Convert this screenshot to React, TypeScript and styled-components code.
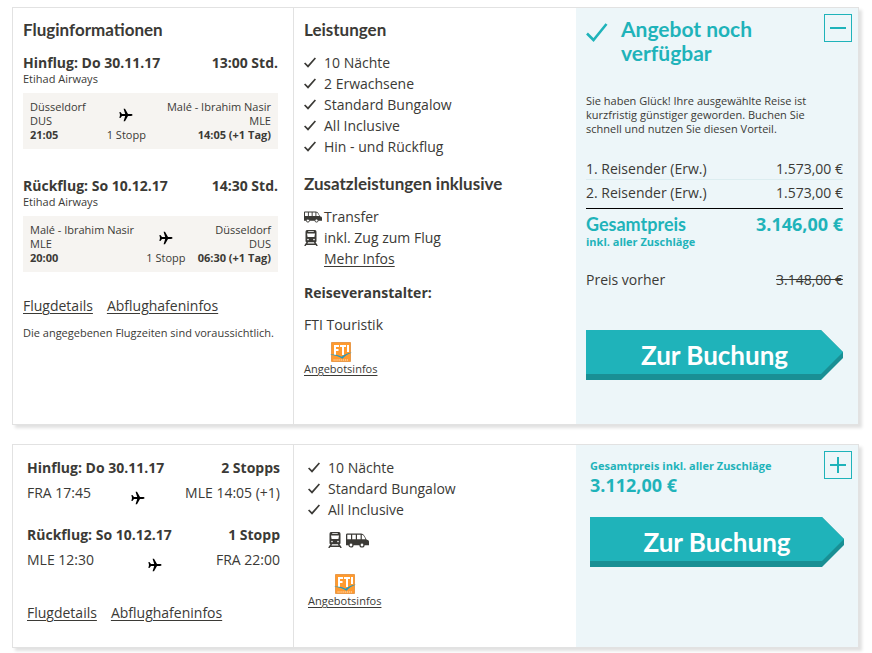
import React from "react";
import styled, { createGlobalStyle, css } from "styled-components";

const ink = "#3b3a36";
const teal = "#1fb3ba";
const tealDark = "#198f94";
const line = "#e2e2e2";

const GlobalStyle = createGlobalStyle`
  *, *::before, *::after { box-sizing: border-box; }
  body {
    margin: 0;
    background: #fff;
    color: ${ink};
    font-family: "Open Sans", "Noto Sans", sans-serif;
    font-size: 14px;
    line-height: 20px;
  }
  h2, h3, p, ul { margin: 0; padding: 0; }
  a { color: inherit; text-underline-offset: 2px; }
`;

const Page = styled.main`
  display: flex;
  flex-direction: column;
  gap: 19px;
  padding: 7px 13px 5px 12px;
`;

const Card = styled.article<{ $tall?: boolean }>`
  display: grid;
  grid-template-columns: 281fr 282fr 282fr;
  min-height: ${(p) => (p.$tall ? 418 : 204)}px;
  border: 1px solid ${line};
  background: #fff;
  box-shadow: 3px 3px 3px rgba(0, 0, 0, 0.12);
`;

const FlightColumn = styled.section<{ $compact?: boolean }>`
  border-right: 1px solid ${line};
  padding: ${(p) => (p.$compact ? "12px 13px 0 14px" : "12px 15px 0 10px")};
`;

const ServiceColumn = styled.section<{ $compact?: boolean }>`
  padding: ${(p) => (p.$compact ? "12px 10px 0 14px" : "12px 10px 0 10px")};
`;

const OfferColumn = styled.section<{ $compact?: boolean }>`
  background: #edf6f9;
  padding: 6px 6px 0 ${(p) => (p.$compact ? 14 : 10)}px;
`;

const headingFont = css`
  font-family: Lato, "Open Sans", sans-serif;
  font-weight: 700;
`;

const Title = styled.h2<{ $spaced?: boolean }>`
  ${headingFont}
  font-size: 17px;
  line-height: 20px;
  margin: ${(p) => (p.$spaced ? "17px 0 12px" : "0 0 12px")};
`;

const SubTitle = styled.h3`
  font-size: 14px;
  font-weight: 700;
  line-height: 20px;
  margin: 14px 0 12px;
`;

const Leg = styled.div<{ $gap: number }>`
  margin-bottom: ${(p) => p.$gap}px;
`;

const LegHeading = styled.h3`
  display: flex;
  justify-content: space-between;
  padding-top: 2px;
  font-size: 14px;
  font-weight: 700;
  line-height: 18px;
`;

const Airline = styled.p`
  font-size: 11px;
  line-height: 14px;
  margin-bottom: 7px;
`;

const Route = styled.div`
  display: flex;
  justify-content: space-between;
  padding: 7px;
  background: #f6f4f1;
  font-size: 11px;
  line-height: 14px;
`;

const Stop = styled.div<{ $end?: boolean }>`
  display: flex;
  flex-direction: column;
  text-align: ${(p) => (p.$end ? "right" : "left")};
`;

const Stopover = styled.div`
  display: flex;
  flex-direction: column;
  align-items: center;
`;

const PlaneBox = styled.span`
  display: flex;
  align-items: center;
  height: 28px;
  padding-top: 2px;
`;

const ShortRoute = styled.div`
  display: flex;
  justify-content: space-between;
  align-items: flex-start;
  min-height: 22px;
  margin-top: 6px;

  svg { align-self: flex-end; }
`;

const Links = styled.nav`
  display: flex;
  gap: 14px;
`;

const Hint = styled.p`
  font-size: 11px;
  line-height: 14px;
  margin-top: 10px;
`;

const ServiceList = styled.ul`
  list-style: none;
  font-size: 14px;
  line-height: 21px;
`;

const ServiceItem = styled.li`
  display: grid;
  grid-template-columns: 20px 1fr;
  align-items: center;
`;

const IconRow = styled.div`
  display: flex;
  align-items: center;
  gap: 4px;
  margin: 12px 0 26px 20px;
`;

const Operator = styled.div<{ $gap?: number }>`
  display: inline-flex;
  flex-direction: column;
  align-items: center;
  font-size: 11px;
  line-height: 14px;
  margin-top: ${(p) => p.$gap ?? 0}px;
`;

const OfferHead = styled.header`
  display: flex;
  align-items: flex-start;
`;

const OfferTitle = styled.h2`
  ${headingFont}
  flex: 1;
  color: ${teal};
  font-size: 21px;
  line-height: 24px;
  padding: 3px 20px 0 13px;
`;

const TickBox = styled.span`
  display: flex;
  padding-top: 9px;
`;

const Toggle = styled.button`
  display: flex;
  align-items: center;
  justify-content: center;
  width: 28px;
  height: 28px;
  padding: 0;
  border: 1px solid ${teal};
  background: transparent;
  cursor: pointer;
`;

const OfferBody = styled.div<{ $compact?: boolean }>`
  margin-right: ${(p) => (p.$compact ? 8 : 9)}px;
`;

const Notice = styled.p`
  font-size: 11px;
  line-height: 14px;
  padding: 29px 20px 0 0;
  margin-bottom: 21px;
`;

const Prices = styled.table`
  width: 100%;
  border-collapse: collapse;
  th, td { padding: 0; font-weight: 400; text-align: left; vertical-align: top; }
  td { text-align: right; }
`;

const TravellerRow = styled.tr<{ $last?: boolean }>`
  th, td {
    padding: ${(p) => (p.$last ? "3px 0 5px" : "2px 0 0")};
    border-bottom: 1px solid ${(p) => (p.$last ? "#000" : "#dcedf0")};
  }
`;

const TotalRow = styled.tr`
  color: ${teal};
  && th { ${headingFont} font-size: 18px; line-height: 20px; padding-top: 5px; }
  && td { font-size: 18px; font-weight: 700; line-height: 20px; padding-top: 5px; }
`;

const Surcharge = styled.small`
  display: block;
  color: ${teal};
  font-family: "Open Sans", sans-serif;
  font-size: 11px;
  font-weight: 700;
  line-height: 16px;
`;

const BeforeRow = styled.tr`
  && th, && td { padding-top: 20px; }
`;

const SumPrice = styled.strong`
  display: block;
  color: ${teal};
  font-size: 18px;
  line-height: 22px;
`;

const CompactSum = styled.div`
  flex: 1;
  padding-top: 7px;
`;

const BookButton = styled.button<{ $gap: number }>`
  ${headingFont}
  display: block;
  width: 100%;
  height: 50px;
  margin-top: ${(p) => p.$gap}px;
  padding: 0;
  border: 0;
  background: ${tealDark};
  clip-path: polygon(0 0, calc(100% - 22px) 0, 100% 22px, 100% 28px, calc(100% - 22px) 100%, 0 100%);
  color: #fff;
  font-size: 26px;
  cursor: pointer;
`;

const BookFace = styled.span`
  display: block;
  height: 50px;
  line-height: 50px;
  background: ${teal};
  clip-path: polygon(0 0, calc(100% - 22px) 0, 100% 22px, calc(100% - 22px) 44px, 0 44px);
`;

const Plane = () => (
  <svg width="14" height="14" viewBox="0 0 14 14" fill="#000" aria-hidden="true">
    <path d="M.4 4h1L3 6.100h3.200L4.600.8H6L9 6.100h3c.9 0 1.500.4 1.500.9s-.6.900-1.500.900H9L6 13.200H4.600l1.600-5.300H3L1.400 10h-1L1 7z" />
  </svg>
);

const Tick = ({ large }: { large?: boolean }) => (
  <svg
    width={large ? 22 : 12}
    height={large ? 19 : 11}
    viewBox={large ? "0 0 22 19" : "0 0 12 11"}
    fill="none"
    stroke={large ? teal : ink}
    strokeWidth={large ? 2.6 : 1.7}
    aria-hidden="true"
  >
    <path d={large ? "M1 10.500L7.500 17 20.500 1" : "M.6 6L4 9.400 11.400 1"} />
  </svg>
);

const Bus = ({ large }: { large?: boolean }) => (
  <svg width={large ? 23 : 18} height={large ? 15 : 12} viewBox="0 0 23 15" aria-hidden="true">
    <path d="M1.500.5H15c1.600 0 2.700 1 3.600 2.500L20.500 6.500l1.700.8c.5.3.8.8.8 1.500v3.500H0V2C0 1 .5.5 1.500.5z" fill={ink} />
    <path d="M1.300 1.700H5v4.600H1.300zM6.200 1.700h3.600v4.600H6.200zM11 1.700h3.600v4.600H11zM15.800 1.700c1.200.1 1.800.8 2.400 1.900l1.300 2.700h-3.700z" fill="#fff" />
    <circle cx="5" cy="12" r="2" fill="#fff" stroke={ink} strokeWidth="1.200" />
    <circle cx="16" cy="12" r="2" fill="#fff" stroke={ink} strokeWidth="1.200" />
  </svg>
);

const Train = () => (
  <svg width="14" height="16" viewBox="0 0 14 16" aria-hidden="true">
    <path d="M3 0h8c.8 0 1.500.8 1.500 2v9c0 .8-.6 1.300-1.400 1.300H2.900c-.8 0-1.400-.5-1.400-1.300V2C1.500.8 2.200 0 3 0z" fill={ink} />
    <path d="M4.200 1.200h5.600v.9H4.200zM3 3.600h8l-.6 3.300H3.600z" fill="#fff" />
    <circle cx="4" cy="9.600" r=".8" fill="#fff" />
    <circle cx="10" cy="9.600" r=".8" fill="#fff" />
    <path d="M3.500 12L.8 16M10.500 12l2.700 4M2.500 14.200h9" stroke={ink} strokeWidth="1.400" />
  </svg>
);

const FtiLogo = () => (
  <svg width="22" height="20" viewBox="0 0 22 20" role="img" aria-label="FTI Touristik">
    <path d="M1.500.5h19v19h-19z" fill="#ff9a2e" stroke="#e99a4a" />
    <path d="M4 3h5v2H6v2h2.500v2H6v4H4zM10 3h6v2h-2v8h-2V5h-2zM17 3h2v7h-2z" fill="#fff" />
    <path d="M0 12.800c4-.6 8 .2 11.500 1.900C14.500 12.400 17.500 11 22 10.400c-4 1.500-7 3.300-9.500 6.300C9 14.600 5 13.300 0 12.800z" fill="#2399bd" />
    <path d="M3.500 18h15" stroke="#fff" strokeDasharray="1.200 .7" opacity=".75" />
  </svg>
);

const ToggleMark = ({ open }: { open?: boolean }) => (
  <svg width="16" height="16" viewBox="0 0 16 16" stroke={teal} strokeWidth="2" aria-hidden="true">
    <path d={open ? "M0 8h16" : "M0 8h16M8 0v16"} />
  </svg>
);

type Place = { name: string; code: string; time: string };

const FullLeg = ({ title, duration, from, to, gap }: {
  title: string; duration: string; from: Place; to: Place; gap: number;
}) => (
  <Leg $gap={gap}>
    <LegHeading><span>{title}</span><span>{duration}</span></LegHeading>
    <Airline>Etihad Airways</Airline>
    <Route>
      <Stop><span>{from.name}</span><span>{from.code}</span><strong>{from.time}</strong></Stop>
      <Stopover><PlaneBox><Plane /></PlaneBox><span>1 Stopp</span></Stopover>
      <Stop $end><span>{to.name}</span><span>{to.code}</span><strong>{to.time}</strong></Stop>
    </Route>
  </Leg>
);

const ShortLeg = ({ title, stops, from, to, gap }: {
  title: string; stops: string; from: string; to: string; gap: number;
}) => (
  <Leg $gap={gap}>
    <LegHeading><span>{title}</span><span>{stops}</span></LegHeading>
    <ShortRoute><span>{from}</span><Plane /><span>{to}</span></ShortRoute>
  </Leg>
);

const FlightLinks = () => (
  <Links aria-label="Fluginformationen">
    <a href="#flugdetails">Flugdetails</a>
    <a href="#abflughafen">Abflughafeninfos</a>
  </Links>
);

const Services = ({ items }: { items: string[] }) => (
  <ServiceList>
    {items.map((item) => (
      <ServiceItem key={item}><Tick /><span>{item}</span></ServiceItem>
    ))}
  </ServiceList>
);

const Book = ({ gap }: { gap: number }) => (
  <BookButton type="button" $gap={gap}><BookFace>Zur Buchung</BookFace></BookButton>
);

export default function App() {
  return (
    <>
      <GlobalStyle />
      <Page>
        <Card $tall>
          <FlightColumn>
            <Title>Fluginformationen</Title>
            <FullLeg
              title="Hinflug: Do 30.11.17"
              duration="13:00 Std."
              from={{ name: "Düsseldorf", code: "DUS", time: "21:05" }}
              to={{ name: "Malé - Ibrahim Nasir", code: "MLE", time: "14:05 (+1 Tag)" }}
              gap={26}
            />
            <FullLeg
              title="Rückflug: So 10.12.17"
              duration="14:30 Std."
              from={{ name: "Malé - Ibrahim Nasir", code: "MLE", time: "20:00" }}
              to={{ name: "Düsseldorf", code: "DUS", time: "06:30 (+1 Tag)" }}
              gap={24}
            />
            <FlightLinks />
            <Hint>Die angegebenen Flugzeiten sind voraussichtlich.</Hint>
          </FlightColumn>
          <ServiceColumn>
            <Title>Leistungen</Title>
            <Services items={["10 Nächte", "2 Erwachsene", "Standard Bungalow", "All Inclusive", "Hin - und Rückflug"]} />
            <Title $spaced>Zusatzleistungen inklusive</Title>
            <ServiceList>
              <ServiceItem><Bus /><span>Transfer</span></ServiceItem>
              <ServiceItem><Train /><span>inkl. Zug zum Flug</span></ServiceItem>
              <ServiceItem><span /><span><a href="#zug">Mehr Infos</a></span></ServiceItem>
            </ServiceList>
            <SubTitle>Reiseveranstalter:</SubTitle>
            <p>FTI Touristik</p>
            <Operator $gap={7}>
              <FtiLogo />
              <a href="#angebotsinfos">Angebotsinfos</a>
            </Operator>
          </ServiceColumn>
          <OfferColumn>
            <OfferHead>
              <TickBox><Tick large /></TickBox>
              <OfferTitle>Angebot noch verfügbar</OfferTitle>
              <Toggle type="button" aria-label="Details ausblenden" aria-expanded="true"><ToggleMark open /></Toggle>
            </OfferHead>
            <OfferBody>
              <Notice>
                Sie haben Glück! Ihre ausgewählte Reise ist kurzfristig günstiger geworden. Buchen Sie schnell und nutzen Sie diesen Vorteil.
              </Notice>
              <Prices>
                <tbody>
                  <TravellerRow><th scope="row">1. Reisender (Erw.)</th><td>1.573,00 €</td></TravellerRow>
                  <TravellerRow $last><th scope="row">2. Reisender (Erw.)</th><td>1.573,00 €</td></TravellerRow>
                  <TotalRow>
                    <th scope="row">Gesamtpreis<Surcharge>inkl. aller Zuschläge</Surcharge></th>
                    <td>3.146,00 €</td>
                  </TotalRow>
                  <BeforeRow><th scope="row">Preis vorher</th><td><s>3.148,00 €</s></td></BeforeRow>
                </tbody>
              </Prices>
              <Book gap={40} />
            </OfferBody>
          </OfferColumn>
        </Card>

        <Card>
          <FlightColumn $compact>
            <ShortLeg title="Hinflug: Do 30.11.17" stops="2 Stopps" from="FRA 17:45" to="MLE 14:05 (+1)" gap={19} />
            <ShortLeg title="Rückflug: So 10.12.17" stops="1 Stopp" from="MLE 12:30" to="FRA 22:00" gap={31} />
            <FlightLinks />
          </FlightColumn>
          <ServiceColumn $compact>
            <Services items={["10 Nächte", "Standard Bungalow", "All Inclusive"]} />
            <IconRow><Train /><Bus large /></IconRow>
            <Operator>
              <FtiLogo />
              <a href="#angebotsinfos-2">Angebotsinfos</a>
            </Operator>
          </ServiceColumn>
          <OfferColumn $compact>
            <OfferHead>
              <CompactSum>
                <Surcharge>Gesamtpreis inkl. aller Zuschläge</Surcharge>
                <SumPrice>3.112,00 €</SumPrice>
              </CompactSum>
              <Toggle type="button" aria-label="Details einblenden" aria-expanded="false"><ToggleMark /></Toggle>
            </OfferHead>
            <OfferBody $compact>
              <Book gap={21} />
            </OfferBody>
          </OfferColumn>
        </Card>
      </Page>
    </>
  );
}
